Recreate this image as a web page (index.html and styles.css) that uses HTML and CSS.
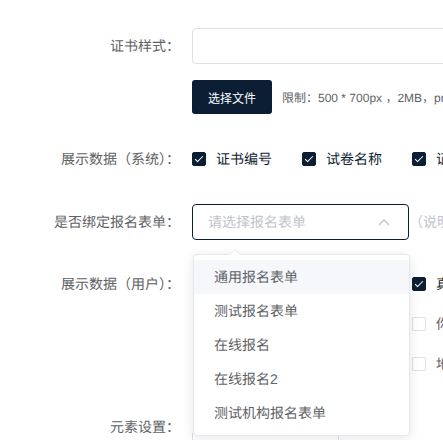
FILE: index.html
```html
<!DOCTYPE html>
<html lang="zh-CN">
<head>
<meta charset="utf-8">
<title>证书设置</title>
<link rel="stylesheet" href="styles.css">
</head>
<body>
<div class="form">
  <div class="item row-style">
    <label class="lbl">证书样式：</label>
    <div class="ctl">
      <div class="input"></div>
      <div class="upload">
        <button class="btn">选择文件</button>
        <span class="tip">限制：500 * 700px ，2MB，png/jpg</span>
      </div>
    </div>
  </div>

  <div class="item row-sys">
    <label class="lbl">展示数据（系统）：</label>
    <div class="ctl checks">
      <span class="cb on"><i class="box"></i><span class="cb-text">证书编号</span></span>
      <span class="cb on"><i class="box"></i><span class="cb-text">试卷名称</span></span>
      <span class="cb on"><i class="box"></i><span class="cb-text">证书名称</span></span>
    </div>
  </div>

  <div class="item row-bind">
    <label class="lbl">是否绑定报名表单：</label>
    <div class="ctl inline">
      <div class="select">
        <span class="placeholder">请选择报名表单</span>
        <svg class="arrow" width="12" height="8" viewBox="0 0 12 8"><polyline points="1,7 6,2 11,7" fill="none" stroke="#c0c4cc" stroke-width="1.3"/></svg>
        <div class="dropdown">
          <span class="pop-arrow"></span>
          <ul class="options">
            <li class="opt hover">通用报名表单</li>
            <li class="opt">测试报名表单</li>
            <li class="opt">在线报名</li>
            <li class="opt">在线报名2</li>
            <li class="opt">测试机构报名表单</li>
          </ul>
        </div>
      </div>
      <span class="note">（说明：绑定后展示用户数据）</span>
    </div>
  </div>

  <div class="item row-user">
    <label class="lbl tall">展示数据（用户）：</label>
    <div class="ctl user-list">
      <span class="cb on"><i class="box"></i><span class="cb-text">真实姓名</span></span>
      <span class="cb"><i class="box"></i><span class="cb-text">你的职位</span></span>
      <span class="cb"><i class="box"></i><span class="cb-text">地址</span></span>
    </div>
  </div>

  <div class="item row-elem">
    <label class="lbl">元素设置：</label>
    <div class="ctl">
      <div class="canvas"><div class="canvas-col"></div></div>
    </div>
  </div>
</div>
</body>
</html>
```

FILE: styles.css
```css
html, body {
  margin: 0;
  padding: 0;
  overflow: hidden;
  background: #ffffff;
}
body {
  font-family: "Liberation Sans", "Noto Sans CJK SC", sans-serif;
  font-size: 14px;
  color: #606266;
  width: 443px;
  height: 440px;
  text-rendering: geometricPrecision;
  -webkit-font-smoothing: antialiased;
}
.form {
  padding-top: 28px;
  width: 900px;
}
.item {
  display: flex;
  align-items: flex-start;
}
.lbl {
  flex: 0 0 180px;
  text-align: right;
  line-height: 36px;
  height: 36px;
  font-size: 14px;
  color: #606266;
  white-space: nowrap;
}
.lbl.tall {
  line-height: 40px;
  height: 40px;
}
.ctl {
  margin-left: 12px;
}
.row-style { margin-bottom: 27px; }
.row-sys { margin-bottom: 27px; }
.row-bind { margin-bottom: 24px; }
.row-user { margin-bottom: 25px; }

.input {
  width: 400px;
  height: 36px;
  box-sizing: border-box;
  border: 1px solid #dcdfe6;
  border-radius: 4px;
}
.upload {
  margin-top: 16px;
  display: flex;
  align-items: center;
}
.btn {
  width: 80px;
  height: 34px;
  border: none;
  border-radius: 3px;
  background: #0b1e33;
  color: #ffffff;
  font-family: "Liberation Sans", "Noto Sans CJK SC", sans-serif;
  font-size: 12px;
  padding: 0;
}
.tip {
  margin-left: 10px;
  font-size: 12px;
  color: #606266;
  white-space: nowrap;
}

.checks {
  display: flex;
  height: 36px;
  align-items: center;
  white-space: nowrap;
}
.cb {
  display: inline-flex;
  align-items: center;
  margin-right: 30px;
  font-size: 14px;
  color: #606266;
  white-space: nowrap;
}
.cb .box {
  position: relative;
  width: 14px;
  height: 14px;
  box-sizing: border-box;
  border: 1px solid #dcdfe6;
  border-radius: 2px;
  background: #ffffff;
  flex: none;
}
.cb.on .box {
  background: #0b1e33;
  border-color: #0b1e33;
}
.cb.on .box::after {
  content: "";
  position: absolute;
  left: 4px;
  top: 1px;
  width: 3px;
  height: 7px;
  border: 1px solid #ffffff;
  border-top: 0;
  border-left: 0;
  transform: rotate(45deg);
}
.cb-text {
  padding-left: 10px;
}
.cb.on .cb-text {
  color: #0b1e33;
}

.inline {
  display: flex;
  align-items: center;
  height: 36px;
}
.select {
  position: relative;
  width: 217px;
  height: 36px;
  box-sizing: border-box;
  border: 1px solid #0b1e33;
  border-radius: 4px;
  display: flex;
  align-items: center;
  padding: 0 15px;
}
.placeholder {
  color: #c0c4cc;
  font-size: 14px;
  flex: 1;
}
.arrow {
  margin-right: 3px;
}
.note {
  margin-left: 0;
  color: #c0c4cc;
  font-size: 14px;
  white-space: nowrap;
}
.dropdown {
  position: absolute;
  left: 0px;
  top: 49px;
  width: 215px;
  background: #ffffff;
  border: 1px solid #e4e7ed;
  border-radius: 4px;
  box-shadow: 0 2px 12px 0 rgba(0, 0, 0, 0.1);
  z-index: 10;
}
.pop-arrow {
  position: absolute;
  left: 35px;
  top: -6px;
  width: 0;
  height: 0;
  border-left: 6px solid transparent;
  border-right: 6px solid transparent;
  border-bottom: 6px solid #e4e7ed;
}
.pop-arrow::after {
  content: "";
  position: absolute;
  left: -5px;
  top: 1px;
  border-left: 5px solid transparent;
  border-right: 5px solid transparent;
  border-bottom: 5px solid #ffffff;
}
.options {
  list-style: none;
  margin: 0;
  padding: 5px 0;
}
.opt {
  height: 34px;
  line-height: 34px;
  padding: 0 20px;
  font-size: 14px;
  color: #606266;
  white-space: nowrap;
}
.opt.hover {
  background: #f5f7fa;
}

.user-list {
  display: flex;
  flex-direction: column;
  padding-left: 220px;
}
.user-list .cb {
  height: 40px;
  margin-right: 0;
}

.canvas {
  margin-top: 24px;
  width: 147px;
  height: 60px;
  box-sizing: border-box;
  border-left: 1px solid #dcdfe6;
  border-top: 1px solid #dcdfe6;
  display: flex;
  justify-content: flex-end;
}
.canvas-col {
  width: 1px;
  height: 100%;
  background: #dcdfe6;
}
```
